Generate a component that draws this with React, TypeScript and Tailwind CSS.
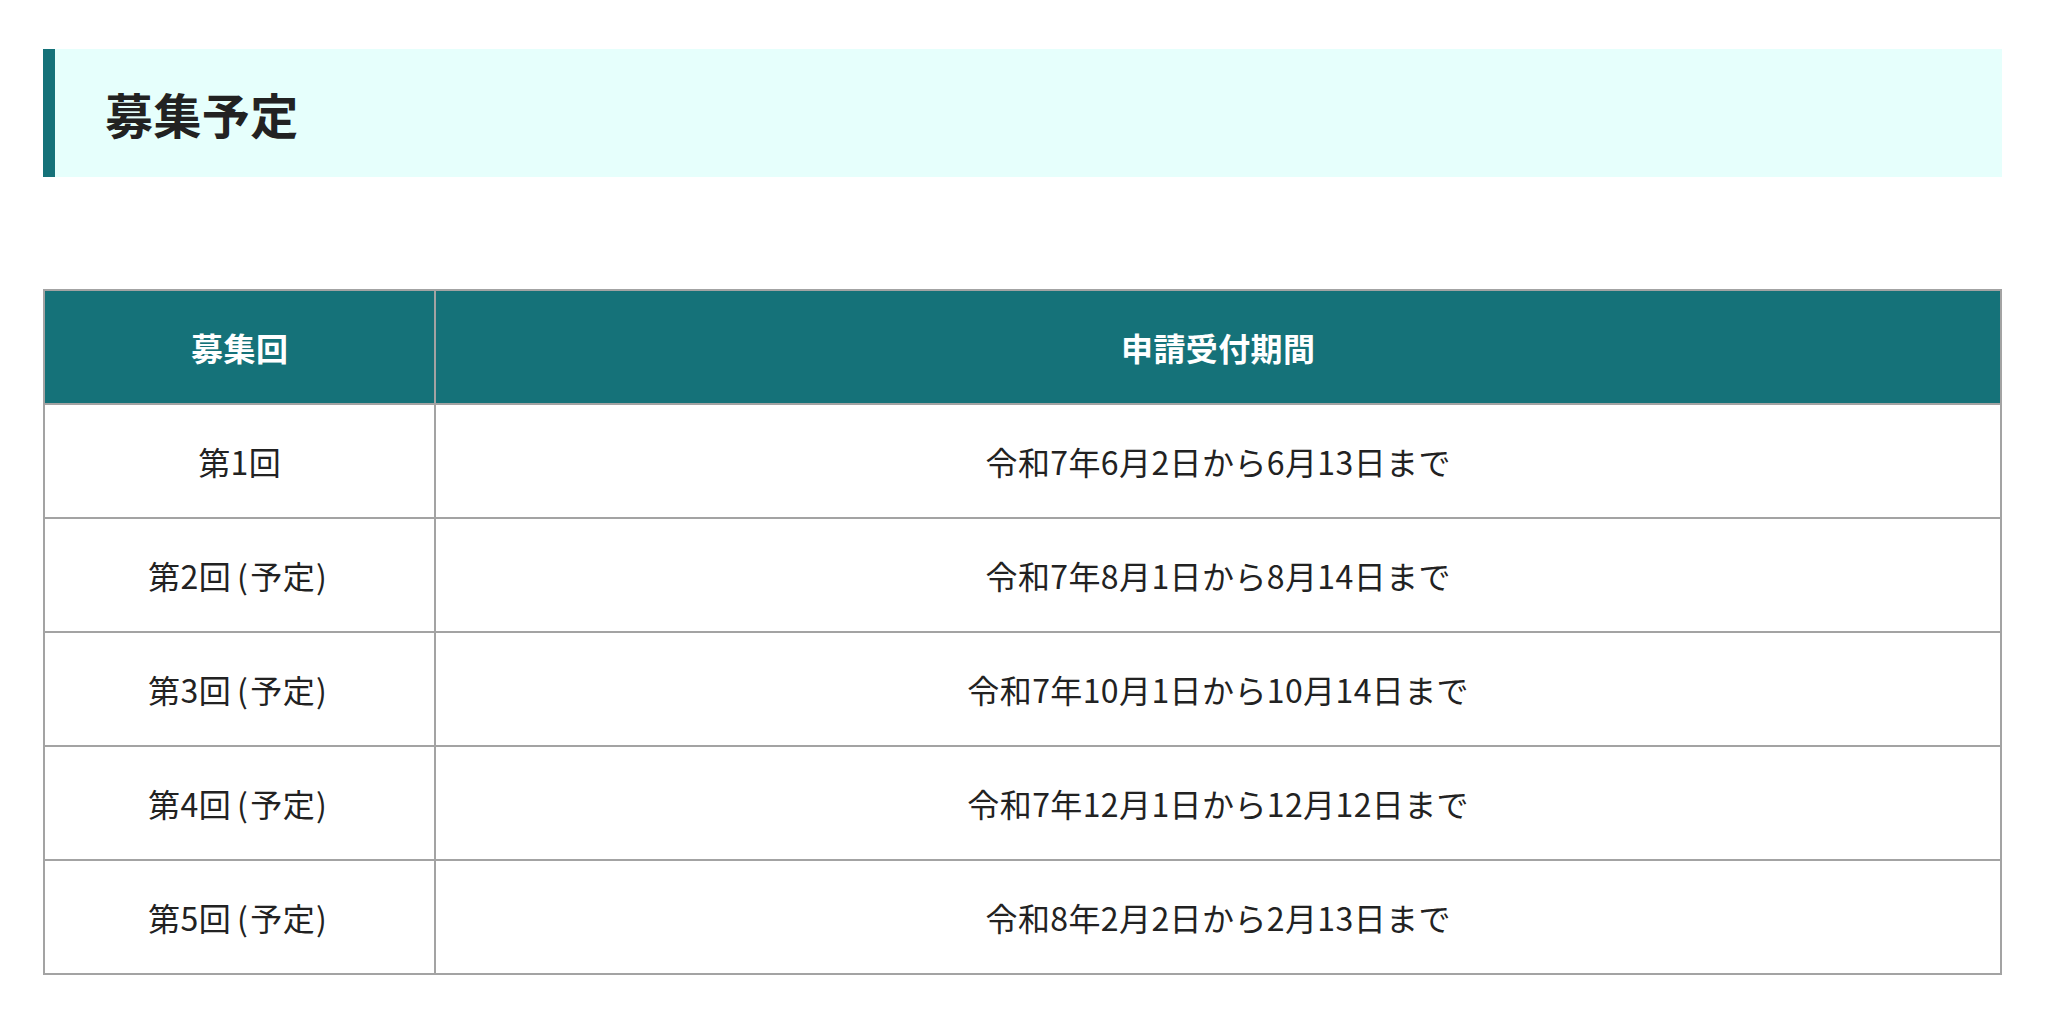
const rounds = [
  { no: 1, planned: false, period: '令和7年6月2日から6月13日まで' },
  { no: 2, planned: true, period: '令和7年8月1日から8月14日まで' },
  { no: 3, planned: true, period: '令和7年10月1日から10月14日まで' },
  { no: 4, planned: true, period: '令和7年12月1日から12月12日まで' },
  { no: 5, planned: true, period: '令和8年2月2日から2月13日まで' },
];

export default function App() {
  return (
    <main
      className="min-h-screen bg-white px-[43px] pt-[49px] pb-12 tracking-[0.025em] text-[#222]"
      style={{ fontFamily: '"Noto Sans CJK JP", "Noto Sans", sans-serif' }}
    >
      {/* Section heading */}
      <h2 className="border-l-[12px] border-[#157279] bg-[#e6fffc] py-[28px] pl-[50px] text-[48px] font-bold leading-[72px]">
        募集予定
      </h2>

      {/* Schedule table */}
      <table className="mt-[112px] w-full border-collapse border-2 border-[#a3a3a3] text-[32px] leading-[48px]">
        <thead>
          <tr className="bg-[#157279] text-white">
            <th className="w-1/5 border-2 border-[#a3a3a3] py-8 font-bold">募集回</th>
            <th className="border-2 border-[#a3a3a3] py-8 font-bold">申請受付期間</th>
          </tr>
        </thead>
        <tbody>
          {rounds.map((r) => (
            <tr key={r.no}>
              <td className="border-2 border-[#a3a3a3] py-8 text-center">
                第{r.no}回
                {r.planned && (
                  <>
                    <span className="ml-[6px] mr-[2px]">(</span>予定<span className="ml-[1px] mr-[4px]">)</span>
                  </>
                )}
              </td>
              <td className="border-2 border-[#a3a3a3] py-8 text-center">{r.period}</td>
            </tr>
          ))}
        </tbody>
      </table>
    </main>
  );
}
